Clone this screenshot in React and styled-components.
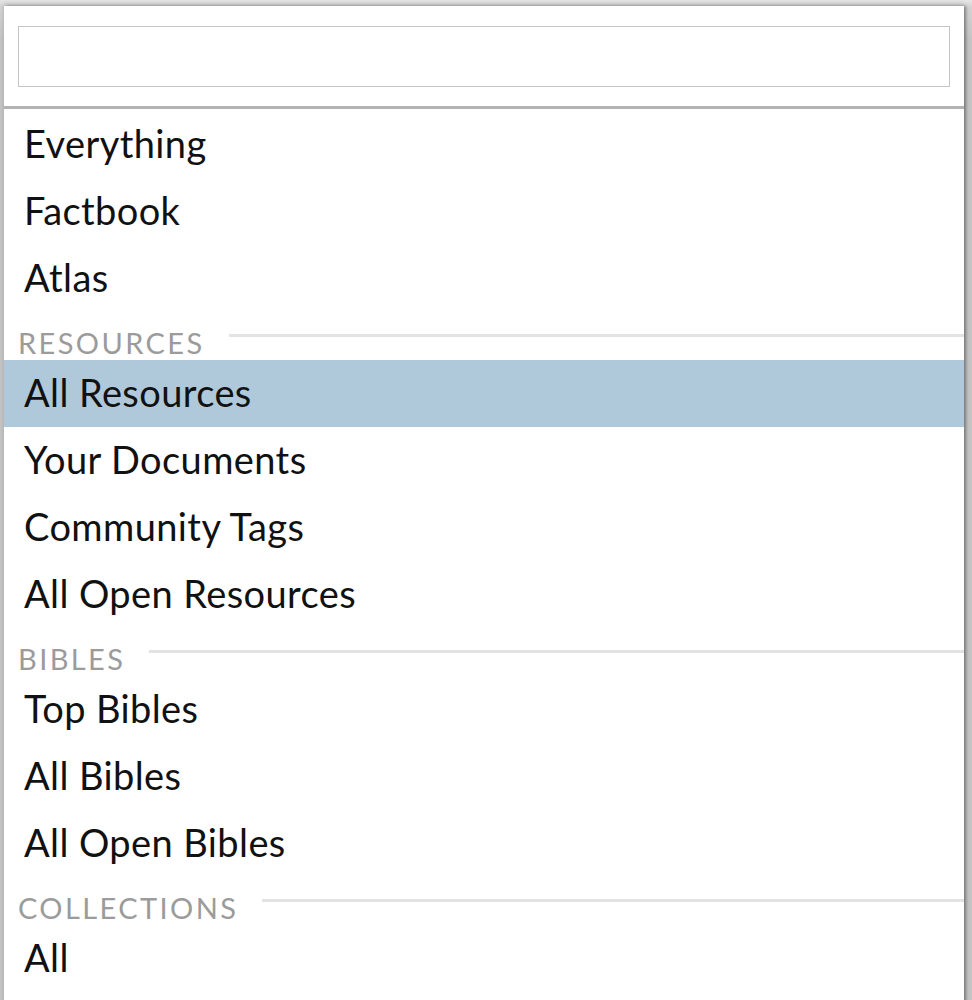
import React from "react";
import styled, { createGlobalStyle } from "styled-components";

const GlobalStyle = createGlobalStyle`
  html, body {
    margin: 0;
    padding: 0;
    background: #c9c9c9;
  }
  body {
    font-family: Lato, "Noto Sans", "Liberation Sans", sans-serif;
    color: #111;
    -webkit-font-smoothing: antialiased;
  }
`;

const Backdrop = styled.div`
  height: 1000px;
  overflow: hidden;
  padding: 6px 0 0 4px;
  box-sizing: border-box;
  background: linear-gradient(#e6e6e6 0, #d2d2d2 8px, #c4c4c4 40px, #c4c4c4);
`;

const Panel = styled.div`
  width: 960px;
  height: 1000px;
  background: #fff;
  box-shadow: 2px 0 3px rgba(0, 0, 0, 0.35), 0 -2px 5px rgba(0, 0, 0, 0.12);
  display: flex;
  flex-direction: column;
`;

const SearchArea = styled.div`
  padding: 20px 14px 19px;
  border-bottom: 3px solid #b3b3b3;
`;

const SearchInput = styled.input`
  display: block;
  width: 100%;
  height: 61px;
  box-sizing: border-box;
  border: 1px solid #c4c4c4;
  outline: none;
  padding: 0 12px;
  font: inherit;
  font-size: 30px;
  background: #fff;
`;

const List = styled.ul`
  list-style: none;
  margin: 0;
  padding: 2px 0 0;
`;

const Item = styled.li`
  height: 67px;
  display: flex;
  align-items: center;
  padding-left: 20px;
  padding-bottom: 4px;
  box-sizing: border-box;
  font-size: 38px;
  letter-spacing: 0.4px;
  color: #111;
  background: ${(p) => (p.$selected ? "#afc9db" : "transparent")};
`;

const GroupHeader = styled.li`
  height: 48px;
  box-sizing: border-box;
  padding: 15px 0 0 14px;
  display: flex;
  align-items: flex-start;
  gap: 24px;
`;

const GroupLabel = styled.span`
  font-size: 29px;
  line-height: 31px;
  letter-spacing: 2.4px;
  color: #9b9b9b;
  text-transform: uppercase;
  white-space: nowrap;
`;

const GroupRule = styled.span`
  flex: 1;
  height: 3px;
  margin-top: 7px;
  background: #e3e3e3;
`;

const groups = [
  { items: ["Everything", "Factbook", "Atlas"] },
  {
    label: "Resources",
    items: ["All Resources", "Your Documents", "Community Tags", "All Open Resources"],
  },
  { label: "Bibles", items: ["Top Bibles", "All Bibles", "All Open Bibles"] },
  { label: "Collections", items: ["All"] },
];

const selected = "All Resources";

export default function App() {
  return (
    <>
      <GlobalStyle />
      <Backdrop>
        <Panel>
          <SearchArea>
            <SearchInput type="text" />
          </SearchArea>
          <List>
            {groups.map((g, i) => (
              <React.Fragment key={i}>
                {g.label && (
                  <GroupHeader>
                    <GroupLabel>{g.label}</GroupLabel>
                    <GroupRule />
                  </GroupHeader>
                )}
                {g.items.map((it) => (
                  <Item key={it} $selected={it === selected}>
                    {it}
                  </Item>
                ))}
              </React.Fragment>
            ))}
          </List>
        </Panel>
      </Backdrop>
    </>
  );
}
